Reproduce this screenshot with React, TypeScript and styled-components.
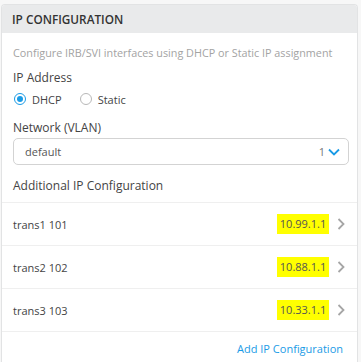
import React, { useState } from 'react';
import styled, { createGlobalStyle } from 'styled-components';

const GlobalStyle = createGlobalStyle`
    html, body {
        margin: 0;
        padding: 0;
        background: #f7f7f7;
        font-family: "Open Sans", "Noto Sans", sans-serif;
    }
`

const Page = styled.div`
    padding: 4px 3px 0 1px;
    height: 362px;
    box-sizing: border-box;
    overflow: hidden;
`

const Card = styled.div`
    background: #fff;
    border: 1px solid #e2e3e4;
    border-bottom: none;
    border-radius: 4px 4px 0 0;
    height: 100%;
    overflow: hidden;
`

const Header = styled.div`
    background: #e9eaeb;
    height: 28px;
    display: flex;
    align-items: center;
    padding: 0 10px;
    font-size: 11.8px;
    font-weight: 600;
    color: #333;
`

const Body = styled.div`
    padding: 12px 8px 0 11px;
    display: flex;
    flex-direction: column;
`

const Hint = styled.div`
    font-size: 10.8px;
    color: #a3a3a3;
    line-height: 16px;
    white-space: nowrap;
`

const Label = styled.div<{ $mt: number }>`
    font-size: 12px;
    color: #444;
    line-height: 16px;
    margin-top: ${props => props.$mt}px;
`

const RadioRow = styled.div`
    display: flex;
    gap: 18px;
    margin-top: 5px;
    height: 16px;
    align-items: center;
    padding-left: 1px;
`

const RadioOption = styled.label`
    display: flex;
    align-items: center;
    gap: 6px;
    font-size: 11px;
    color: #444;
    cursor: pointer;
`

const RadioDot = styled.span<{ $checked?: boolean }>`
    width: 12px;
    height: 12px;
    border-radius: 50%;
    border: 1px solid ${props => props.$checked ? '#1a9be6' : '#b8b8b8'};
    box-sizing: border-box;
    position: relative;
    background: #fff;
    &::after {
        content: '';
        display: ${props => props.$checked ? 'block' : 'none'};
        position: absolute;
        left: 2px;
        top: 2px;
        width: 6px;
        height: 6px;
        border-radius: 50%;
        background: #1a9be6;
    }
`

const Select = styled.div`
    margin-top: 2px;
    height: 27px;
    box-sizing: border-box;
    border: 1px solid #d3d3d3;
    border-radius: 5px;
    display: flex;
    align-items: center;
    padding: 0 8px 0 11px;
    font-size: 11px;
    color: #555;
`

const SelectValue = styled.span`
    flex: 1;
`

const SelectNum = styled.span`
    color: #777;
    margin-right: 3px;
`

const List = styled.div`
    margin-top: 8px;
    border-top: 1px solid #efefef;
`

const Row = styled.div`
    height: 43px;
    box-sizing: border-box;
    display: flex;
    align-items: center;
    padding: 0 12px 0 11px;
    border-bottom: 1px solid #efefef;
`

const RowName = styled.span`
    flex: 1;
    font-size: 11px;
    color: #444;
`

const Ip = styled.span`
    background: #ffff00;
    font-size: 11px;
    color: #555;
    height: 20px;
    line-height: 20px;
    width: 52px;
    text-align: center;
`

const Chevron = styled.svg`
    margin-left: 8px;
`

const AddLink = styled.a`
    display: block;
    text-align: right;
    padding: 9px 14px 0 0;
    line-height: 16px;
    font-size: 11px;
    color: #1a9be6;
    text-decoration: none;
`

const rows = [
    { name: 'trans1 101', ip: '10.99.1.1' },
    { name: 'trans2 102', ip: '10.88.1.1' },
    { name: 'trans3 103', ip: '10.33.1.1' },
]

const App = () => {
    const [mode, setMode] = useState('dhcp');
    return (
        <Page>
            <GlobalStyle />
            <Card>
                <Header>IP CONFIGURATION</Header>
                <Body>
                    <Hint>Configure IRB/SVI interfaces using DHCP or Static IP assignment</Hint>
                    <Label $mt={9}>IP Address</Label>
                    <RadioRow>
                        <RadioOption onClick={() => setMode('dhcp')}>
                            <RadioDot $checked={mode === 'dhcp'} />DHCP
                        </RadioOption>
                        <RadioOption onClick={() => setMode('static')}>
                            <RadioDot $checked={mode === 'static'} />Static
                        </RadioOption>
                    </RadioRow>
                    <Label $mt={13}>Network (VLAN)</Label>
                    <Select>
                        <SelectValue>default</SelectValue>
                        <SelectNum>1</SelectNum>
                        <svg width="12" height="8" viewBox="0 0 12 8">
                            <path d="M1 1.5 L6 6.5 L11 1.5" fill="none" stroke="#1a9be6" strokeWidth="1.8" />
                        </svg>
                    </Select>
                    <Label $mt={13}>Additional IP Configuration</Label>
                </Body>
                <List>
                    {rows.map(r => (
                        <Row key={r.name}>
                            <RowName>{r.name}</RowName>
                            <Ip>{r.ip}</Ip>
                            <Chevron width="8" height="12" viewBox="0 0 8 12">
                                <path d="M1.5 1 L6.5 6 L1.5 11" fill="none" stroke="#a6a6a6" strokeWidth="1.8" />
                            </Chevron>
                        </Row>
                    ))}
                </List>
                <AddLink href="#">Add IP Configuration</AddLink>
            </Card>
        </Page>
    )
}

export default App;
